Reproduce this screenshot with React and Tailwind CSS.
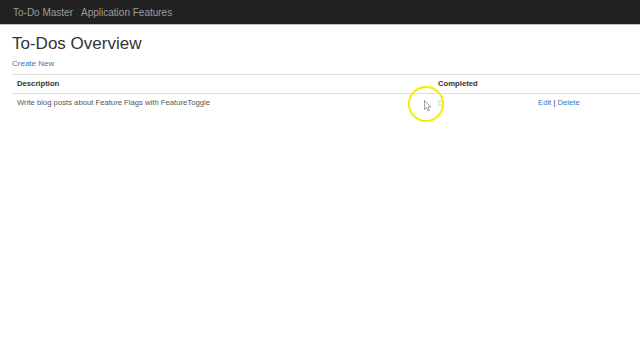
import React from 'react';

const App = () => {
  return (
    <div className="min-h-screen bg-white text-[#333] relative" style={{ fontFamily: '"Liberation Sans", Arial, sans-serif' }}>
      {/* Navbar */}
      <div className="h-[25px] bg-[#222] border-b border-[#c8c3b8] flex items-center px-[13px] gap-[8px] text-[10px] text-[#9d9d9d]">
        <span>To-Do Master</span>
        <span>Application Features</span>
      </div>

      <div className="pl-[12px]">
        <h1 className="text-[17px] leading-none mt-[10px] text-[#333]">To-Dos Overview</h1>
        <a className="block text-[8px] text-[#337ab7] mt-[8px] leading-none">Create New</a>

        <table className="w-full mt-[6px] text-[7.7px] border-collapse">
          <thead>
            <tr className="border-t border-b border-[#ddd]">
              <th className="text-left font-bold text-[#333] pl-[5px] h-[19px] w-[421px]">Description</th>
              <th className="text-left font-bold text-[#333] pl-[5px] w-[100px]">Completed</th>
              <th></th>
            </tr>
          </thead>
          <tbody>
            <tr>
              <td className="text-[#555] pl-[5px] h-[19px]">Write blog posts about Feature Flags with FeatureToggle</td>
              <td className="pl-[5px]">
                <span className="inline-block w-[6px] h-[6px] border border-[#ddd] bg-[#f6f6f6] align-middle"></span>
              </td>
              <td className="text-[#337ab7] pl-[5px]">
                Edit <span className="text-[#333]">|</span> Delete
              </td>
            </tr>
          </tbody>
        </table>
      </div>

      {/* Cursor highlight */}
      <div className="absolute left-[408px] top-[86px] w-[36px] h-[36px] rounded-full border-2 border-[#f2f000]"></div>
      <svg className="absolute left-[424px] top-[100px]" width="8" height="12" viewBox="0 0 8 12">
        <path d="M0.5 0.5 L0.5 9.5 L2.5 7.5 L4 11 L5.5 10.3 L4 7 L7 7 Z" fill="#fff" stroke="#888" strokeWidth="0.8" />
      </svg>
    </div>
  );
};

export default App;
